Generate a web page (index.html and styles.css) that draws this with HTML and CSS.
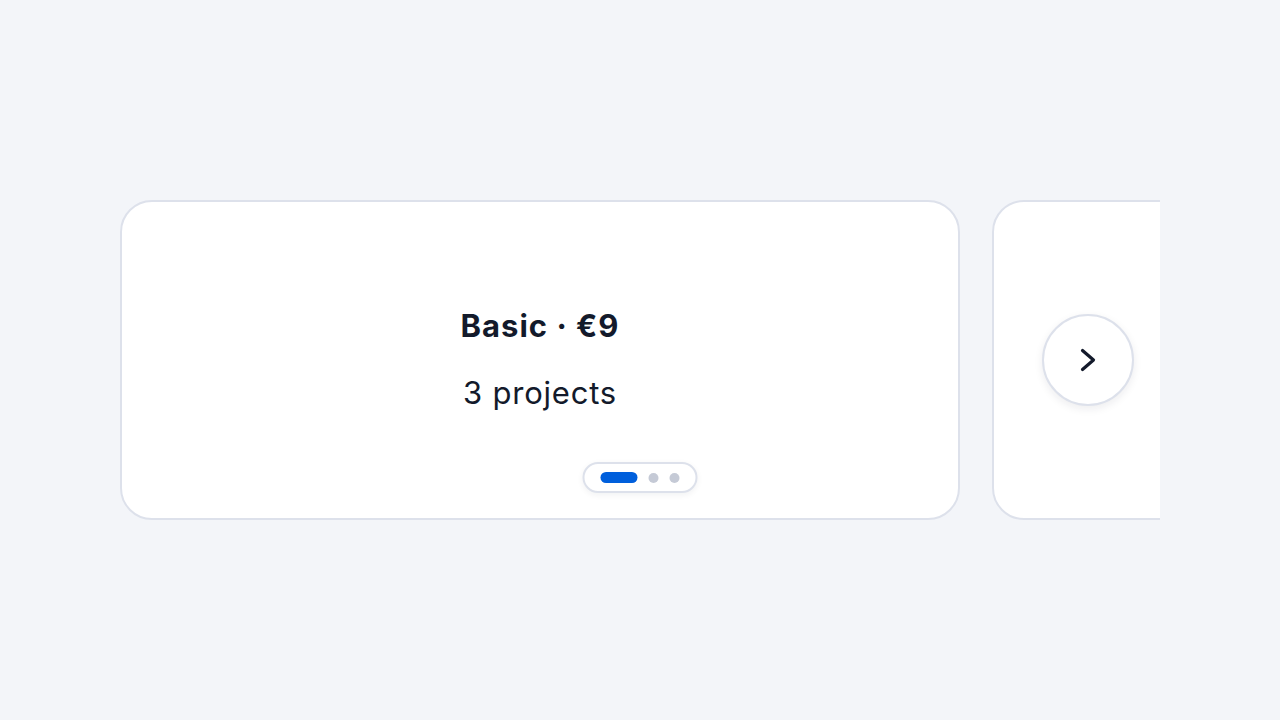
FILE: index.html
```html
<!DOCTYPE html>
<html lang="en">

<head>
  <meta charset="UTF-8">
  <meta name="viewport" content="width=device-width, initial-scale=1.0">
  <title>Plans carousel</title>
  <link rel="stylesheet" href="styles.css">
</head>

<body>
  <div class="carousel">
    <div class="carousel-track">
      <div class="slide is-active">
        <h2 class="slide-title">Basic · €9</h2>
        <p class="slide-text">3 projects</p>
      </div>
      <div class="slide" aria-hidden="true">
        <h2 class="slide-title">Pro · €19</h2>
        <p class="slide-text">10 projects</p>
      </div>
      <div class="slide" aria-hidden="true">
        <h2 class="slide-title">Team · €49</h2>
        <p class="slide-text">Unlimited projects</p>
      </div>
    </div>

    <!-- 下一张 -->
    <button class="carousel-next" aria-label="Next slide">
      <svg width="24" height="24" viewBox="0 0 24 24" fill="none">
        <path d="M6.5 2.5L17.5 12L6.5 21.5" stroke="currentColor" stroke-width="3.2" stroke-linecap="round"
          stroke-linejoin="round" />
      </svg>
    </button>

    <div class="carousel-dots">
      <span class="dot active"></span>
      <span class="dot"></span>
      <span class="dot"></span>
    </div>
  </div>
</body>

</html>
```

FILE: styles.css
```css
* {
  margin: 0;
  padding: 0;
  box-sizing: border-box;
}

:root {
  --page-bg: #f3f5f9;
  --card-bg: #fff;
  --line: #dde1eb;
  --ink: #131a2b;
  --accent: #005fdc;
  --dot: #c5cad6;
  --slide-width: 840px;
  --slide-height: 320px;
}

body {
  display: flex;
  justify-content: center;
  align-items: center;
  height: 100vh;
  background-color: var(--page-bg);
  font-family: Inter, "Noto Sans", sans-serif;
  color: var(--ink);
}

.carousel {
  position: relative;
  width: 1040px;
  height: var(--slide-height);
}

.carousel-track {
  display: flex;
  gap: 32px;
  height: 100%;
  overflow: hidden;
}

.slide {
  display: flex;
  flex-direction: column;
  justify-content: center;
  align-items: center;
  flex-shrink: 0;
  width: var(--slide-width);
  height: 100%;
  padding-bottom: 2px;
  background: var(--card-bg);
  border: 2px solid var(--line);
  border-radius: 32px;
  text-align: center;

  /** 非当前页内容不显示 */
  &:not(.is-active)>* {
    visibility: hidden;
  }
}

.slide-title {
  font-size: 31px;
  font-weight: 700;
  line-height: 36px;
  letter-spacing: 1px;
}

.slide-text {
  margin-top: 31px;
  font-size: 31px;
  font-weight: 400;
  line-height: 36px;
  letter-spacing: .8px;
}

.carousel-next {
  position: absolute;
  top: 50%;
  right: 26px;
  display: flex;
  justify-content: center;
  align-items: center;
  width: 92px;
  height: 92px;
  transform: translateY(-50%);
  background: var(--card-bg);
  border: 2px solid var(--line);
  border-radius: 50%;
  box-shadow: 0 3px 8px rgba(20, 27, 45, .08);
  color: var(--ink);
  cursor: pointer;
}

.carousel-dots {
  position: absolute;
  left: 50%;
  bottom: 27px;
  display: flex;
  align-items: center;
  gap: 11px;
  padding: 8px 16px;
  transform: translateX(-50%);
  background: var(--card-bg);
  border: 2px solid var(--line);
  border-radius: 9999px;
  box-shadow: 0 2px 6px rgba(20, 27, 45, .06);

  & .dot {
    width: 10px;
    height: 10px;
    background: var(--dot);
    border-radius: 9999px;
  }

  & .dot.active {
    width: 37px;
    height: 11px;
    background: var(--accent);
  }
}
```
